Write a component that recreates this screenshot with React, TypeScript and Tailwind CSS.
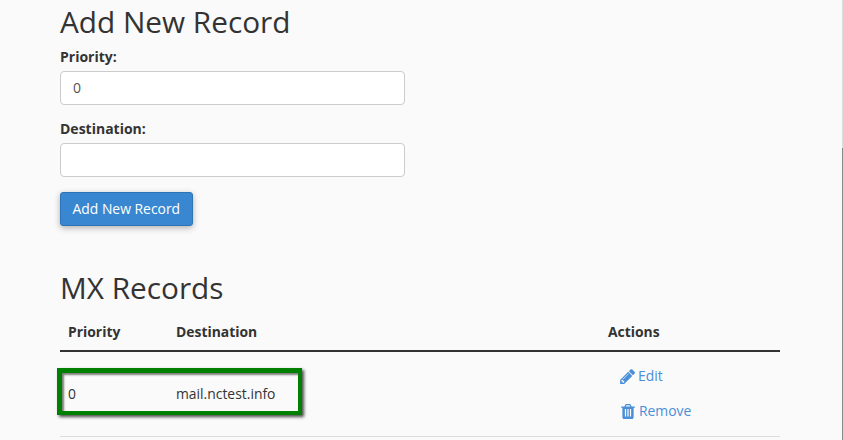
function PencilIcon() {
  return (
    <svg viewBox="128 128 1515 1536" className="h-[15px] w-[15px] fill-current">
      <path d="M491 1536l91-91-235-235-91 91v107h128v128h107zm523-928q0-22-22-22-10 0-17 7l-542 542q-7 7-7 17 0 22 22 22 10 0 17-7l542-542q7-7 7-17zm-54-192l416 416-832 832h-416v-416zm683 96q0 53-37 90l-166 166-416-416 166-165q36-38 90-38 53 0 91 38l235 234q37 39 37 91z" />
    </svg>
  );
}

function TrashIcon() {
  return (
    <svg viewBox="192 128 1408 1536" className="ml-px h-[15px] w-[14px] fill-current">
      <path d="M704 1376v-704q0-14-9-23t-23-9h-64q-14 0-23 9t-9 23v704q0 14 9 23t23 9h64q14 0 23-9t9-23zm256 0v-704q0-14-9-23t-23-9h-64q-14 0-23 9t-9 23v704q0 14 9 23t23 9h64q14 0 23-9t9-23zm256 0v-704q0-14-9-23t-23-9h-64q-14 0-23 9t-9 23v704q0 14 9 23t23 9h64q14 0 23-9t9-23zm-544-992h448l-48-117q-7-9-17-11h-317q-10 2-17 11zm928 32v64q0 14-9 23t-23 9h-96v948q0 83-47 143.5t-113 60.5h-832q-66 0-113-58.5t-47-141.5v-952h-96q-14 0-23-9t-9-23v-64q0-14 9-23t23-9h309l70-167q15-37 54-63t79-26h320q40 0 79 26t54 63l70 167h309q14 0 23 9t9 23z" />
    </svg>
  );
}

function Field({ label, value }: { label: string; value: string }) {
  return (
    <div className="mb-[14px]">
      <label className="mb-[4px] block h-5 text-sm leading-5 font-bold text-[#333]">{label}</label>
      <div className="flex h-[34px] w-[345px] items-center rounded border border-[#ccc] bg-white px-3 text-sm text-[#555]">
        {value}
      </div>
    </div>
  );
}

function App() {
  return (
    <div className="relative h-[440px] w-[843px] overflow-hidden bg-[#fafafa] pl-[60px] font-['Open_Sans',sans-serif] text-[13.9px] text-[#333]">
      <h2 className="mt-[4px] mb-[7px] h-[36px] text-[29.75px] leading-[36px] font-normal">Add New Record</h2>
      <Field label="Priority:" value="0" />
      <Field label="Destination:" value="" />
      <button className="mt-px h-[34px] rounded-[3px] border border-[#2e74b5] bg-[#3a87d1] px-[11.5px] text-white shadow-[0_2px_6px_rgba(0,0,0,0.3)]">
        Add New Record
      </button>

      <h2 className="mt-[44px] mb-[9px] h-[36px] text-[29.75px] leading-[36px] font-normal">MX Records</h2>
      <div className="w-[720px]">
        <div className="flex h-[37px] items-center border-b-2 border-[#333] font-bold">
          <div className="w-[108px] pl-2">Priority</div>
          <div className="w-[432px] pl-2">Destination</div>
          <div className="pl-2">Actions</div>
        </div>
        <div className="flex h-[85px] items-center border-b border-[#ddd]">
          <div className="w-[108px] pl-2">0</div>
          <div className="w-[432px] pl-2">mail.nctest.info</div>
          <div className="flex flex-col gap-[15px] pl-[20px] text-[#4a8fd8]">
            <a className="flex h-5 items-center gap-[3px]">
              <PencilIcon />
              Edit
            </a>
            <a className="flex h-5 items-center gap-[4px]">
              <TrashIcon />
              Remove
            </a>
          </div>
        </div>
      </div>

      {/* green annotation drawn over the row */}
      <div className="absolute top-[368px] left-[57px] h-[47px] w-[245px] border-[5px] border-r-[4px] border-b-[4px] border-[#008000] shadow-[2px_2px_3px_rgba(0,0,0,0.7),inset_2px_2px_2px_rgba(0,0,0,0.5)]" />
      {/* scrollbar edge */}
      <div className="absolute top-0 right-0 h-[148px] w-px bg-[#ddd]" />
      <div className="absolute top-[148px] right-0 h-[292px] w-px bg-[#888]" />
    </div>
  );
}

export default App;
